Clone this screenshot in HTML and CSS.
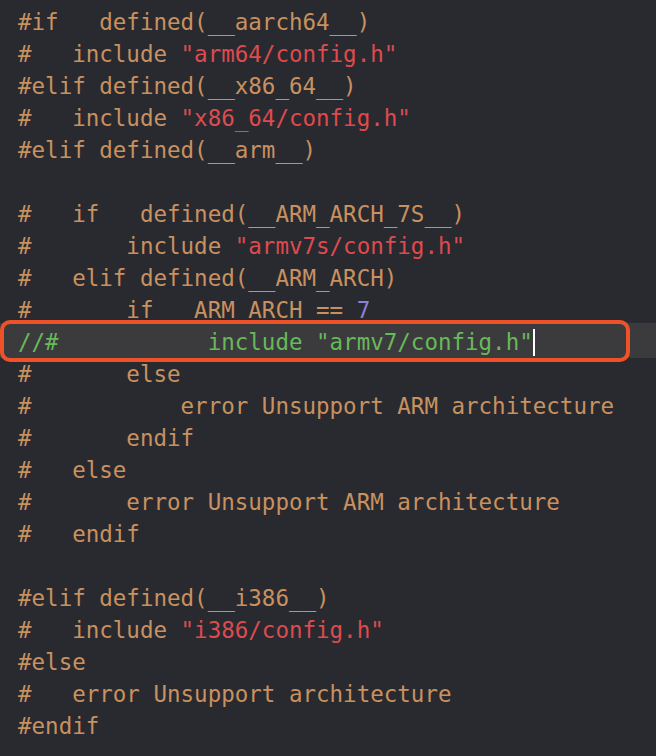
FILE: index.html
```html
<!DOCTYPE html>
<html>
<head>
<meta charset="utf-8">
<link rel="stylesheet" href="styles.css">
</head>
<body>
<div class="editor">
<div class="line"><span class="pp">#if   defined(__aarch64__)</span></div>
<div class="line"><span class="pp">#   include </span><span class="str">"arm64/config.h"</span></div>
<div class="line"><span class="pp">#elif defined(__x86_64__)</span></div>
<div class="line"><span class="pp">#   include </span><span class="str">"x86_64/config.h"</span></div>
<div class="line"><span class="pp">#elif defined(__arm__)</span></div>
<div class="line"> </div>
<div class="line"><span class="pp">#   if   defined(__ARM_ARCH_7S__)</span></div>
<div class="line"><span class="pp">#       include </span><span class="str">"armv7s/config.h"</span></div>
<div class="line"><span class="pp">#   elif defined(__ARM_ARCH)</span></div>
<div class="line"><span class="pp">#       if __ARM_ARCH == </span><span class="num">7</span></div>
<div class="line current"><span class="cmt">//#           include "armv7/config.h"</span><span class="cursor"></span></div>
<div class="line"><span class="pp">#       else</span></div>
<div class="line"><span class="pp">#           error Unsupport ARM architecture</span></div>
<div class="line"><span class="pp">#       endif</span></div>
<div class="line"><span class="pp">#   else</span></div>
<div class="line"><span class="pp">#       error Unsupport ARM architecture</span></div>
<div class="line"><span class="pp">#   endif</span></div>
<div class="line"> </div>
<div class="line"><span class="pp">#elif defined(__i386__)</span></div>
<div class="line"><span class="pp">#   include </span><span class="str">"i386/config.h"</span></div>
<div class="line"><span class="pp">#else</span></div>
<div class="line"><span class="pp">#   error Unsupport architecture</span></div>
<div class="line"><span class="pp">#endif</span></div>
</div>
</body>
</html>
```
FILE: styles.css
```css
html, body {
  margin: 0;
  padding: 0;
  background: #292a30;
  height: 100%;
  overflow: hidden;
}
.editor {
  padding-top: 6px;
  font-family: "DejaVu Sans Mono", "Liberation Mono", monospace;
  font-size: 22.5px;
}
.line {
  height: 32px;
  line-height: 32px;
  padding-left: 18px;
  white-space: pre;
  color: #c8915f;
}
.pp { color: #c8915f; }
.str { color: #df4a4e; }
.num { color: #8b80d1; }
.cmt { color: #67b95a; }
.current {
  position: relative;
  background: #3b3b3d;
  margin-top: -3px;
  padding-top: 3px;
}
.current::after {
  content: "";
  position: absolute;
  left: 0;
  top: -3px;
  width: 630px;
  height: 42px;
  box-sizing: border-box;
  border: 4px solid #ef5129;
  border-radius: 10px;
}
.cursor {
  display: inline-block;
  width: 2px;
  height: 27px;
  background: #ffffff;
  vertical-align: -6px;
}
```
